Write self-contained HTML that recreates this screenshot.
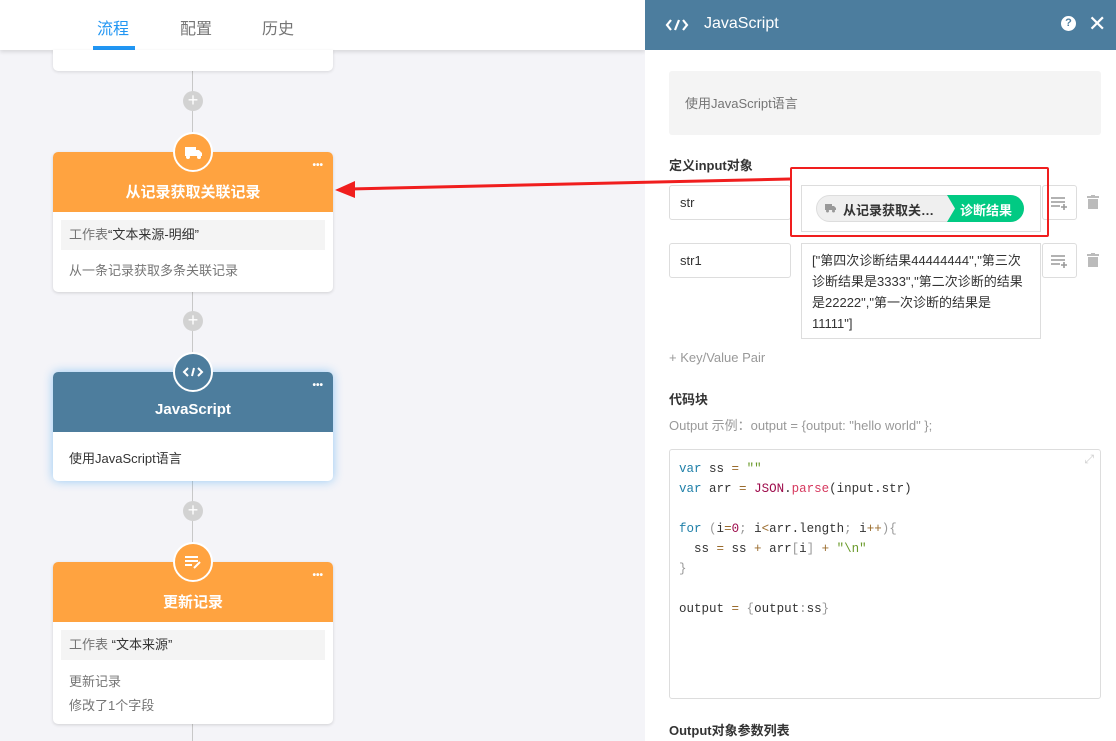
<!DOCTYPE html>
<html><head><meta charset="utf-8"><style>
*{box-sizing:border-box;margin:0;padding:0}
body{width:1116px;height:741px;overflow:hidden;background:#f4f4f8;font-family:"Liberation Sans","Noto Sans CJK SC",sans-serif;font-size:13px;color:#333;position:relative}
.abs{position:absolute}
.nav{left:0;top:0;width:645px;height:50px;background:#fff;box-shadow:0 2px 4px rgba(0,0,0,.12)}
.tab{top:15px;font-size:16px;color:#757575}
.line{left:192px;width:1px;background:#c8c8c8}
.plus{width:20px;height:20px;border-radius:50%;background:#d2d2d2;color:#fff;font-size:18px;line-height:19px;text-align:center}
.card{left:53px;width:280px;background:#fff;border-radius:5px;box-shadow:0 1px 3px rgba(0,0,0,.15);overflow:hidden}
.hd{height:60px;color:#fff;font-weight:bold;font-size:15px;text-align:center;padding-top:29px;position:relative}
.dots{position:absolute;right:10px;top:8px;font-size:10px;letter-spacing:0px}
.ic{width:40px;height:40px;border-radius:50%;border:2px solid #fff;left:173px}
.gray{background:#f4f4f4;margin:8px 8px 0;height:30px;line-height:30px;padding-left:8px;color:#757575}
.panel{left:645px;top:0;width:471px;height:741px;background:#fff}
.inp{border:1px solid #ddd;border-radius:3px;background:#fff}
pre{font-family:"Liberation Mono","Noto Sans CJK SC",monospace;font-size:12.5px;line-height:20px;color:#333}
.k{color:#1f7fa8}.s{color:#6a9a2a}.o{color:#9a6b2c}.r{color:#9d0a4a}.p{color:#d6385e}.g{color:#999}
</style></head><body>
<div class="abs nav"></div>
<div class="abs tab" style="left:97px;color:#2196f3">流程</div>
<div class="abs tab" style="left:180px">配置</div>
<div class="abs tab" style="left:262px">历史</div>
<div class="abs" style="left:93px;top:46px;width:42px;height:4px;background:#2196f3"></div>

<div class="abs line" style="top:71px;height:670px"></div>
<div class="abs" style="left:53px;top:50px;width:280px;height:21px;background:#fff;border-radius:0 0 5px 5px;box-shadow:0 1px 3px rgba(0,0,0,.12)"></div>
<div class="abs plus" style="left:183px;top:91px">+</div>
<div class="abs plus" style="left:183px;top:311px">+</div>
<div class="abs plus" style="left:183px;top:501px">+</div>

<div class="abs card" style="top:152px;height:140px">
 <div class="hd" style="background:#ffa340">从记录获取关联记录<span class="dots">•••</span></div>
 <div class="gray"><span>工作表</span><span style="color:#333">“文本来源-明细”</span></div>
 <div style="padding:10px 16px;color:#757575">从一条记录获取多条关联记录</div>
</div>
<div class="abs ic" style="top:132px;background:#ffa340"><svg width="36" height="36" viewBox="0 0 36 36"><path d="M10 13h11v9H10zM21 16h3l3 3v3h-6z" fill="#fff"/><circle cx="13" cy="23" r="2" fill="#fff"/><circle cx="24" cy="23" r="2" fill="#fff"/></svg></div>

<div class="abs card" style="top:372px;height:109px;box-shadow:0 0 10px rgba(33,150,243,.45)">
 <div class="hd" style="background:#4d7d9d">JavaScript<span class="dots">•••</span></div>
 <div style="padding:16px 16px;color:#333">使用JavaScript语言</div>
</div>
<div class="abs ic" style="top:352px;background:#4d7d9d"><svg width="36" height="36" viewBox="0 0 36 36" fill="none" stroke="#fff" stroke-width="2"><path d="M13 14l-4 4 4 4M23 14l4 4-4 4M19 14l-2 8"/></svg></div>

<div class="abs card" style="top:562px;height:162px">
 <div class="hd" style="background:#ffa340">更新记录<span class="dots">•••</span></div>
 <div class="gray"><span>工作表 </span><span style="color:#333">“文本来源”</span></div>
 <div style="padding:10px 16px 0;color:#757575;line-height:24px">更新记录<br>修改了1个字段</div>
</div>
<div class="abs ic" style="top:542px;background:#ffa340"><svg width="36" height="36" viewBox="0 0 36 36" fill="none" stroke="#fff" stroke-width="2"><path d="M10 13h13M10 17h13M10 21h7M19 24l6-6"/></svg></div>

<div class="abs panel">
 <div class="abs" style="left:0;top:0;width:471px;height:50px;background:#4c7d9e"></div>
 <svg class="abs" style="left:20px;top:15px" width="24" height="20" viewBox="0 0 24 20" fill="none" stroke="#fff" stroke-width="2.2"><path d="M6 5l-4 5 4 5M18 5l4 5-4 5M14 5l-4 10"/></svg>
 <div class="abs" style="left:59px;top:15px;color:#fff;font-size:16px">JavaScript</div>
 <div class="abs" style="left:416px;top:16px;width:15px;height:15px;border-radius:50%;background:#fff;color:#4c7d9e;font-size:11px;font-weight:bold;text-align:center;line-height:15px">?</div>
 <div class="abs" style="left:443px;top:11px;color:#fff;font-size:22px">✕</div>
 <div class="abs" style="left:24px;top:71px;width:432px;height:64px;background:#f4f4f4;border-radius:3px;color:#757575;padding:22px 16px">使用JavaScript语言</div>
 <div class="abs" style="left:24px;top:155px;font-weight:bold">定义input对象</div>
 <div class="abs inp" style="left:24px;top:185px;width:122px;height:35px;padding:9px 10px">str</div>
 <div class="abs inp" style="left:156px;top:185px;width:240px;height:47px;border-radius:0"></div>
 <div class="abs" style="left:171px;top:195px;width:208px;height:27px;border-radius:14px;background:#efefef;border:1px solid #ddd"></div>
 <div class="abs" style="left:302px;top:195px;width:77px;height:27px;border-radius:0 14px 14px 0;background:#01ca83;clip-path:polygon(0 0,100% 0,100% 100%,0 100%,8px 50%)"></div>
 <svg class="abs" style="left:180px;top:204px" width="12" height="9" viewBox="0 0 12 9"><path d="M0 0h7v6H0zM7 2h2l2 2v2H7z" fill="#999"/><circle cx="2.5" cy="7" r="1.5" fill="#999"/><circle cx="8.5" cy="7" r="1.5" fill="#999"/></svg>
 <div class="abs" style="left:198px;top:200px;font-weight:bold;color:#333">从记录获取关…</div>
 <div class="abs" style="left:315px;top:200px;font-weight:bold;color:#fff">诊断结果</div>
 <div class="abs inp" style="left:397px;top:185px;width:35px;height:35px"><svg width="33" height="33" viewBox="0 0 33 33" fill="none" stroke="#999" stroke-width="1.6"><path d="M8 12h14M8 16h14M8 20h9M21 18v6M18 21h6"/></svg></div>
 <svg class="abs" style="left:442px;top:195px" width="12" height="14" viewBox="0 0 12 14" fill="#bbb"><rect x="0" y="1" width="12" height="2"/><rect x="4" y="0" width="4" height="2"/><rect x="1" y="4" width="10" height="10"/></svg>
 <div class="abs inp" style="left:24px;top:243px;width:122px;height:35px;padding:9px 10px">str1</div>
 <div class="abs inp" style="left:156px;top:243px;width:240px;height:96px;border-radius:0;padding:6px 10px;line-height:21px">["第四次诊断结果44444444","第三次诊断结果是3333","第二次诊断的结果是22222","第一次诊断的结果是11111"]</div>
 <div class="abs inp" style="left:397px;top:243px;width:35px;height:35px"><svg width="33" height="33" viewBox="0 0 33 33" fill="none" stroke="#999" stroke-width="1.6"><path d="M8 12h14M8 16h14M8 20h9M21 18v6M18 21h6"/></svg></div>
 <svg class="abs" style="left:442px;top:253px" width="12" height="14" viewBox="0 0 12 14" fill="#bbb"><rect x="0" y="1" width="12" height="2"/><rect x="4" y="0" width="4" height="2"/><rect x="1" y="4" width="10" height="10"/></svg>
 <div class="abs" style="left:24px;top:350px;color:#999">+ Key/Value Pair</div>
 <div class="abs" style="left:24px;top:389px;font-weight:bold">代码块</div>
 <div class="abs" style="left:24px;top:415px;color:#999">Output 示例：output = {output: "hello world" };</div>
 <div class="abs inp" style="left:24px;top:449px;width:432px;height:250px;padding:9px 9px">
<pre><span class="k">var</span> ss <span class="o">=</span> <span class="s">""</span>
<span class="k">var</span> arr <span class="o">=</span> <span class="r">JSON</span>.<span class="p">parse</span>(input.str)

<span class="k">for</span> <span class="g">(</span>i<span class="o">=</span><span class="r">0</span><span class="g">;</span> i<span class="o">&lt;</span>arr.length<span class="g">;</span> i<span class="o">++</span><span class="g">){</span>
  ss <span class="o">=</span> ss <span class="o">+</span> arr<span class="g">[</span>i<span class="g">]</span> <span class="o">+</span> <span class="s">"\n"</span>
<span class="g">}</span>

output <span class="o">=</span> <span class="g">{</span>output<span class="g">:</span>ss<span class="g">}</span></pre>
  <div class="abs" style="right:6px;top:2px;color:#ccc;font-size:12px">⤢</div>
 </div>
 <div class="abs" style="left:24px;top:720px;font-weight:bold">Output对象参数列表</div>
</div>

<div class="abs" style="left:790px;top:167px;width:259px;height:70px;border:2px solid #f01e1e;border-radius:2px"></div>
<svg class="abs" style="left:0;top:0" width="1116" height="741"><path d="M790 179L350 189" stroke="#f01e1e" stroke-width="3"/><path d="M335 190l20-9v17z" fill="#f01e1e"/></svg>
</body></html>
